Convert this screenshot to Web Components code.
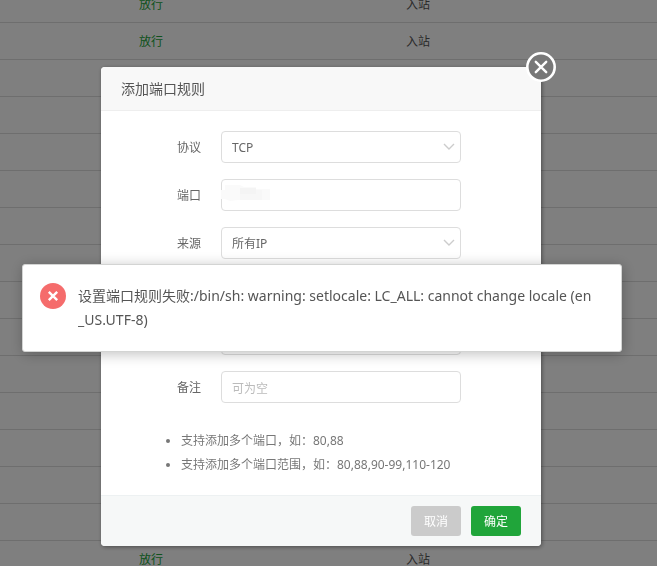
<!DOCTYPE html>
<html lang="zh-CN">
<head>
<meta charset="utf-8">
<title>添加端口规则</title>
<style>
    html, body {
        height: 100%;
    }
    body {
        margin: 0;
        overflow: hidden;
        background: #FFF;
        color: #666;
        font: 12px/24px "Noto Sans", "Noto Sans CJK SC", sans-serif;
    }
</style>
</head>
<body>

<bt-rule-table></bt-rule-table>

<bt-modal heading="添加端口规则">
    <bt-field label="协议" type="select" value="TCP"></bt-field>
    <bt-field label="端口" masked></bt-field>
    <bt-field label="来源" type="select" value="所有IP"></bt-field>
    <bt-field type="select"></bt-field>
    <bt-field type="select"></bt-field>
    <bt-field label="备注" placeholder="可为空"></bt-field>
    <bt-tips>
        <li>支持添加多个端口，如：80,88</li>
        <li>支持添加多个端口范围，如：80,88,90-99,110-120</li>
    </bt-tips>
    <bt-button slot="footer">取消</bt-button>
    <bt-button slot="footer" primary>确定</bt-button>
</bt-modal>

<bt-message>设置端口规则失败:/bin/sh: warning: setlocale: LC_ALL: cannot change locale (en_US.UTF-8)</bt-message>

<script>
// Attach an open shadow root and fill it
function render(el, html) {
    const root = el.attachShadow({mode: 'open'});
    const template = document.createElement('template');
    template.innerHTML = html;
    root.appendChild(template.content.cloneNode(true));
    return root;
}

// List of firewall rules, sits under the dialog
window.customElements.define('bt-rule-table', class BT_RULE_TABLE extends HTMLElement {

    constructor() {
        super();

        const root = render(this, `
            <style>
                :host {
                    display: block;
                    height: 100%;
                    overflow: hidden;
                }
                table {
                    width: 100%;
                    margin-top: -14px;
                    border-spacing: 0;
                    table-layout: fixed;
                    line-height: 20px;
                }
                td {
                    box-sizing: border-box;
                    height: 37px;
                    padding: 2px 0 0;
                    border-bottom: 1px solid #DDD;
                    color: #555;
                }
                .check {
                    width: 139px;
                }
                .policy {
                    width: 267px;
                    color: #20A53A;
                }
            </style>
            <table><tbody></tbody></table>
        `);

        const tBody = root.querySelector('tbody');
        const rowCount = 16;

        for (let i = 0; i < rowCount; i++) {
            const filled = i < 2 || i === rowCount - 1;
            const row = tBody.insertRow();
            row.insertCell().className = 'check';
            const policy = row.insertCell();
            policy.className = 'policy';
            policy.textContent = filled ? '放行' : '';
            row.insertCell().textContent = filled ? '入站' : '';
        }
    }

});

window.customElements.define('bt-modal', class BT_MODAL extends HTMLElement {

    constructor() {
        super();

        const root = render(this, `
            <style>
                :host {
                    position: fixed;
                    inset: 0;
                    display: flex;
                    justify-content: center;
                    align-items: flex-start;
                    box-sizing: border-box;
                    padding: 67px 15px 0 0;
                    background: rgba(0, 0, 0, .5);
                }
                section {
                    position: relative;
                    width: 440px;
                    max-width: 90%;
                    border-radius: 4px;
                    background: #FFF;
                    box-shadow: 1px 1px 4px rgba(0, 0, 0, .4);
                }
                header {
                    padding: 0 20px;
                    border-bottom: 1px solid #EEE;
                    border-radius: 4px 4px 0 0;
                    background: #F8F8F8;
                    color: #555;
                }
                h2 {
                    margin: 0;
                    font-size: 14px;
                    font-weight: 400;
                    line-height: 43px;
                }
                .body {
                    display: flex;
                    flex-direction: column;
                    gap: 16px;
                    padding: 20px 80px 18px 20px;
                }
                footer {
                    display: flex;
                    justify-content: flex-end;
                    gap: 10px;
                    padding: 10px 20px;
                    border-top: 1px solid #EDF1F2;
                    border-radius: 0 0 4px 4px;
                    background: #F6F8F8;
                }
                .close {
                    position: absolute;
                    top: -15px;
                    right: -15px;
                    width: 30px;
                    height: 30px;
                    padding: 0;
                    border: 0;
                    background: none;
                }
                svg {
                    display: block;
                }
            </style>
            <section>
                <header><h2></h2></header>
                <div class="body"><slot></slot></div>
                <footer><slot name="footer"></slot></footer>
                <button class="close" type="button">
                    <svg width="30" height="30" viewBox="0 0 30 30">
                        <circle cx="15" cy="15" r="13.7" fill="#787878" stroke="#FFF" stroke-width="2.6"/>
                        <path d="M9.8 9.8l10.4 10.4M20.2 9.8l-10.4 10.4" stroke="#FFF" stroke-width="2.4" stroke-linecap="round"/>
                    </svg>
                </button>
            </section>
        `);

        root.querySelector('h2').textContent = this.getAttribute('heading');
    }

});

// One labelled row of the form
window.customElements.define('bt-field', class BT_FIELD extends HTMLElement {

    constructor() {
        super();

        const isSelect = this.getAttribute('type') === 'select';

        const root = render(this, `
            <style>
                :host {
                    display: grid;
                    grid-template-columns: 1fr 240px;
                    column-gap: 20px;
                    align-items: center;
                }
                label {
                    padding-top: 2px;
                    text-align: right;
                    color: #666;
                }
                .control {
                    display: grid;
                    position: relative;
                }
                input, select {
                    appearance: none;
                    box-sizing: border-box;
                    width: 100%;
                    height: 32px;
                    margin: 0;
                    padding: 2px 10px 0;
                    border: 1px solid #DDD;
                    border-radius: 4px;
                    background: #FFF;
                    color: #666;
                    font: inherit;
                }
                input::placeholder {
                    color: #BBB;
                }
                svg {
                    position: absolute;
                    pointer-events: none;
                }
                .arrow {
                    top: 12px;
                    right: 6px;
                }
                .mask {
                    top: 5px;
                    left: 0;
                }
            </style>
            <label for="control"></label>
            <div class="control">
                ${isSelect ? `
                    <select id="control"><option></option></select>
                    <svg class="arrow" width="12" height="8" viewBox="0 0 12 8">
                        <path d="M1 1l5 5 5-5" fill="none" stroke="#CCC" stroke-width="1.4"/>
                    </svg>
                ` : '<input id="control" type="text">'}
            </div>
        `);

        root.querySelector('label').textContent = this.getAttribute('label') || '';

        const control = root.querySelector('#control');

        if (isSelect) {
            control.options[0].textContent = this.getAttribute('value') || '';
        }
        else {
            control.placeholder = this.getAttribute('placeholder') || '';
        }

        // Pixelated cover over a private value
        if (this.hasAttribute('masked')) {
            root.querySelector('.control').insertAdjacentHTML('beforeend', `
                <svg class="mask" width="50" height="18" viewBox="0 0 50 18">
                    <path d="M0 6h4V1h15l4 2h12v2h14v11H17l-8 1-5-2H0z" fill="#FAFAFA"/>
                    <path d="M19 4h16v6H19z" fill="#F4F4F4"/>
                    <path d="M19 10h16v6H19zM35 6h6v10h-6z" fill="#F7F7F7"/>
                </svg>
            `);
        }
    }

});

window.customElements.define('bt-tips', class BT_TIPS extends HTMLElement {

    constructor() {
        super();

        render(this, `
            <style>
                :host {
                    display: block;
                    margin: 10px -60px 0 0;
                }
                ul {
                    margin: 0;
                    padding-left: 60px;
                    color: #777;
                }
            </style>
            <ul><slot></slot></ul>
        `);
    }

});

window.customElements.define('bt-button', class BT_BUTTON extends HTMLElement {

    constructor() {
        super();

        render(this, `
            <style>
                :host {
                    display: block;
                }
                button {
                    display: block;
                    width: 50px;
                    height: 30px;
                    padding: 2px 0 0;
                    border: 0;
                    border-radius: 3px;
                    background: #CBCBCB;
                    color: #FFF;
                    font: inherit;
                }
                :host([primary]) button {
                    background: #20A53A;
                }
            </style>
            <button type="button"><slot></slot></button>
        `);
    }

});

// Error message on top of everything
window.customElements.define('bt-message', class BT_MESSAGE extends HTMLElement {

    constructor() {
        super();

        render(this, `
            <style>
                :host {
                    position: fixed;
                    top: 264px;
                    left: 0;
                    right: 13px;
                    display: flex;
                    justify-content: center;
                }
                div {
                    display: flex;
                    gap: 12px;
                    box-sizing: border-box;
                    width: 600px;
                    max-width: 95%;
                    padding: 19px 26px 19px 17px;
                    border: 1px solid #D3D4D3;
                    border-radius: 3px;
                    background: #FFF;
                    box-shadow: 1px 2px 14px rgba(0, 0, 0, .25);
                }
                svg {
                    flex: none;
                    margin-top: -1px;
                }
                p {
                    margin: 0;
                    color: #555;
                    font-size: 14px;
                    word-break: break-all;
                }
            </style>
            <div role="alert">
                <svg width="26" height="26" viewBox="0 0 26 26">
                    <circle cx="13" cy="13" r="13" fill="#F56C6C"/>
                    <path d="M8.8 8.8l8.4 8.4M17.2 8.8l-8.4 8.4" stroke="#FFF" stroke-width="2.4"/>
                </svg>
                <p><slot></slot></p>
            </div>
        `);
    }

});
</script>
</body>
</html>
